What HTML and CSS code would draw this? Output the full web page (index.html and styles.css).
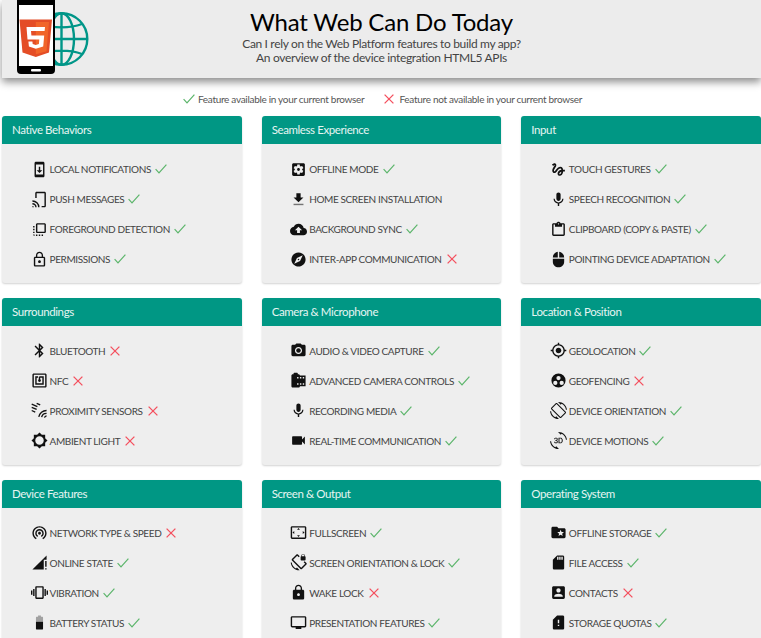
FILE: index.html
```html
<!DOCTYPE html>
<html lang="en">
<head>
<meta charset="utf-8">
<title>What Web Can Do Today</title>
<link rel="stylesheet" href="styles.css">
</head>
<body>
<svg class="defs" width="0" height="0" aria-hidden="true">
<defs>
<symbol id="ok" viewBox="0 0 12 10"><path d="M.6 5.2 4 8.8 11.4.6" fill="none" stroke="currentColor" stroke-width="1.2"/></symbol>
<symbol id="no" viewBox="0 0 10 10"><path d="M.6.6l8.8 8.8M9.4.6.6 9.4" fill="none" stroke="currentColor" stroke-width="1.3"/></symbol>
<symbol id="i-notify" viewBox="0 0 24 24"><path d="M17 1.01L7 1c-1.1 0-2 .9-2 2v18c0 1.1.9 2 2 2h10c1.1 0 2-.9 2-2V3c0-1.1-.9-1.99-2-1.99zM17 19H7V5h10v14zm-1-6h-3V8h-2v5H8l4 4 4-4z"/></symbol>
<symbol id="i-push" viewBox="0 0 24 24"><path d="M8 1h11c1.1 0 2 .9 2 2v18c0 1.1-.9 2-2 2h-4v-2h4V3H8v7H6V3c0-1.1.9-2 2-2zM2 21a2 2 0 0 1 2 2H2zm0-4a6 6 0 0 1 6 6H6a4 4 0 0 0-4-4zm0-4a10 10 0 0 1 10 10h-2a8 8 0 0 0-8-8z"/></symbol>
<symbol id="i-front" viewBox="0 0 24 24"><path d="M3 13h2v-2H3v2zm0 4h2v-2H3v2zm2 4v-2H3c0 1.1.89 2 2 2zM3 9h2V7H3v2zm12 12h2v-2h-2v2zm4-18H9c-1.11 0-2 .9-2 2v10c0 1.1.89 2 2 2h10c1.1 0 2-.9 2-2V5c0-1.1-.9-2-2-2zm0 12H9V5h10v10zm-8 6h2v-2h-2v2zm-4 0h2v-2H7v2z"/></symbol>
<symbol id="i-perm" viewBox="0 0 24 24"><path d="M12 17c1.1 0 2-.9 2-2s-.9-2-2-2-2 .9-2 2 .9 2 2 2zm6-9h-1V6c0-2.76-2.24-5-5-5S7 3.24 7 6v2H6c-1.1 0-2 .9-2 2v10c0 1.1.9 2 2 2h12c1.1 0 2-.9 2-2V10c0-1.1-.9-2-2-2zM8.9 6c0-1.71 1.39-3.1 3.1-3.1s3.1 1.39 3.1 3.1v2H8.9V6zM18 20H6V10h12v10z"/></symbol>
<symbol id="i-offline" viewBox="0 0 24 24"><path d="M12 10c-1.1 0-2 .9-2 2s.9 2 2 2 2-.9 2-2-.9-2-2-2zm7-7H5c-1.11 0-2 .9-2 2v14c0 1.1.89 2 2 2h14c1.11 0 2-.9 2-2V5c0-1.1-.89-2-2-2zm-1.75 9c0 .23-.02.46-.05.68l1.48 1.16c.13.11.17.3.08.45l-1.4 2.42c-.09.15-.27.21-.43.15l-1.74-.7c-.36.28-.76.51-1.18.69l-.26 1.85c-.03.17-.18.3-.35.3h-2.8c-.17 0-.32-.13-.35-.29l-.26-1.85c-.43-.18-.82-.41-1.18-.69l-1.74.7c-.16.06-.34 0-.43-.15l-1.4-2.42c-.09-.15-.05-.34.08-.45l1.48-1.16c-.03-.23-.05-.46-.05-.69 0-.23.02-.46.05-.68l-1.48-1.16c-.13-.11-.17-.3-.08-.45l1.4-2.42c.09-.15.27-.21.43-.15l1.74.7c.36-.28.76-.51 1.18-.69l.26-1.85c.03-.17.18-.3.35-.3h2.8c.17 0 .32.13.35.29l.26 1.85c.43.18.82.41 1.18.69l1.74-.7c.16-.06.34 0 .43.15l1.4 2.42c.09.15.05.34-.08.45l-1.48 1.16c.03.23.05.46.05.69z"/></symbol>
<symbol id="i-home" viewBox="0 0 24 24"><path d="M19 9h-4V3H9v6H5l7 7 7-7z"/><path d="M5 18v2h14v-2H5z" opacity=".55"/></symbol>
<symbol id="i-cloud" viewBox="0 0 24 24"><path d="M19.35 10.04C18.67 6.59 15.64 4 12 4 9.11 4 6.6 5.64 5.35 8.04 2.34 8.36 0 10.91 0 14c0 3.31 2.69 6 6 6h13c2.76 0 5-2.24 5-5 0-2.64-2.05-4.78-4.65-4.96zM14 13v4h-4v-4H7l5-5 5 5h-3z"/></symbol>
<symbol id="i-explore" viewBox="0 0 24 24"><path d="M12 10.9c-.61 0-1.1.49-1.1 1.1s.49 1.1 1.1 1.1c.61 0 1.1-.49 1.1-1.1s-.49-1.1-1.1-1.1zM12 2C6.48 2 2 6.48 2 12s4.48 10 10 10 10-4.48 10-10S17.52 2 12 2zm2.19 12.19L6 18l3.81-8.19L18 6l-3.81 8.19z"/></symbol>
<symbol id="i-gesture" viewBox="0 0 24 24"><path d="M4.59 6.89c.7-.71 1.4-1.35 1.71-1.22.5.2 0 1.03-.3 1.52-.25.42-2.86 3.89-2.86 6.31 0 1.28.48 2.34 1.34 2.98.75.56 1.74.73 2.64.46 1.07-.31 1.95-1.4 3.06-2.77 1.21-1.49 2.83-3.44 4.08-3.44 1.63 0 1.65 1.01 1.76 1.79-3.78.64-5.38 3.67-5.38 5.37 0 1.7 1.44 3.09 3.21 3.09 1.63 0 4.29-1.33 4.69-6.1H21v-2.5h-2.47c-.15-1.65-1.09-4.2-4.03-4.2-2.25 0-4.18 1.91-4.94 2.84-.58.73-2.06 2.48-2.29 2.72-.25.3-.68.84-1.11.84-.45 0-.72-.83-.36-1.92.35-1.09 1.4-2.86 1.85-3.52.78-1.14 1.3-1.92 1.3-3.28C8.95 3.69 7.31 3 6.44 3 5.12 3 3.97 4 3.72 4.25c-.36.36-.66.66-.88.93l1.75 1.71zm9.29 11.66c-.31 0-.74-.26-.74-.72 0-.6.73-2.2 2.87-2.76-.3 2.69-1.43 3.48-2.13 3.48z"/></symbol>
<symbol id="i-mic" viewBox="0 0 24 24"><path d="M12 14c1.66 0 2.99-1.34 2.99-3L15 5c0-1.66-1.34-3-3-3S9 3.34 9 5v6c0 1.66 1.34 3 3 3zm5.3-3c0 3-2.54 5.1-5.3 5.1S6.7 14 6.7 11H5c0 3.41 2.72 6.23 6 6.72V21h2v-3.28c3.28-.48 6-3.3 6-6.72h-1.7z"/></symbol>
<symbol id="i-clip" viewBox="0 0 24 24"><path d="M19 3h-4.18C14.4 1.84 13.3 1 12 1c-1.3 0-2.4.84-2.82 2H5c-1.1 0-2 .9-2 2v14c0 1.1.9 2 2 2h14c1.1 0 2-.9 2-2V5c0-1.1-.9-2-2-2zm-7 0c.55 0 1 .45 1 1s-.45 1-1 1-1-.45-1-1 .45-1 1-1zm7 16H5V5h2v3h10V5h2v14z"/></symbol>
<symbol id="i-mouse" viewBox="0 0 24 24"><path d="M13 1.07V9h7c0-4.08-3.05-7.44-7-7.93zM4 15c0 4.42 3.58 8 8 8s8-3.58 8-8v-4H4v4zm7-13.93C7.05 1.56 4 4.92 4 9h7V1.07z"/></symbol>
<symbol id="i-bt" viewBox="0 0 24 24"><path d="M17.71 7.71L12 2h-1v7.59L6.41 5 5 6.41 10.59 12 5 17.59 6.41 19 11 14.41V22h1l5.71-5.71-4.3-4.29 4.3-4.29zM13 5.83l1.88 1.88L13 9.59V5.83zm1.88 10.46L13 18.17v-3.76l1.88 1.88z"/></symbol>
<symbol id="i-nfc" viewBox="0 0 24 24"><path d="M20 2H4c-1.1 0-2 .9-2 2v16c0 1.1.9 2 2 2h16c1.1 0 2-.9 2-2V4c0-1.1-.9-2-2-2zm0 18H4V4h16v16zM18 6h-5c-1.1 0-2 .9-2 2v2.28c-.6.35-1 .98-1 1.72 0 1.1.9 2 2 2s2-.9 2-2c0-.74-.4-1.38-1-1.72V8h3v8H8V8h2V6H6v12h12V6z"/></symbol>
<symbol id="i-prox" viewBox="0 0 24 24"><path d="M1 3l8 3.500M1 7.500l7 3M1 12l5 2.200M8 2l5 2.200M11 21a11 11 0 0 1 11-9M15 21.500a7 7 0 0 1 7-5.500M19 22a3.500 3.500 0 0 1 3-2.500" fill="none" stroke="currentColor" stroke-width="1.900"/></symbol>
<symbol id="i-amb" viewBox="0 0 24 24"><path d="M20 15.31L23.31 12 20 8.69V4h-4.69L12 .69 8.69 4H4v4.690L.69 12 4 15.31V20h4.690L12 23.31 15.31 20H20v-4.690zM12 18c-3.310 0-6-2.690-6-6s2.690-6 6-6 6 2.690 6 6-2.690 6-6 6z"/></symbol>
<symbol id="i-cam" viewBox="0 0 24 24"><circle cx="12" cy="12" r="3.200"/><path d="M9 2L7.170 4H4c-1.100 0-2 .9-2 2v12c0 1.100.9 2 2 2h16c1.100 0 2-.9 2-2V6c0-1.100-.9-2-2-2h-3.170L15 2H9zm3 15c-2.760 0-5-2.240-5-5s2.240-5 5-5 5 2.240 5 5-2.240 5-5 5z"/></symbol>
<symbol id="i-roll" viewBox="0 0 24 24"><path d="M14 5c0-1.100-.9-2-2-2h-1V2c0-.55-.45-1-1-1H6c-.55 0-1 .45-1 1v1H4c-1.100 0-2 .9-2 2v15c0 1.100.9 2 2 2h8c1.100 0 2-.9 2-2h8V5h-8zm-2 13h-2v-2h2v2zm0-9h-2V7h2v2zm4 9h-2v-2h2v2zm0-9h-2V7h2v2zm4 9h-2v-2h2v2zm0-9h-2V7h2v2z"/></symbol>
<symbol id="i-video" viewBox="0 0 24 24"><path d="M17 10.500V7c0-.55-.45-1-1-1H4c-.55 0-1 .45-1 1v10c0 .55.45 1 1 1h12c.55 0 1-.45 1-1v-3.500l4 4v-11l-4 4z"/></symbol>
<symbol id="i-geo" viewBox="0 0 24 24"><path d="M12 8c-2.210 0-4 1.790-4 4s1.790 4 4 4 4-1.790 4-4-1.790-4-4-4zm8.940 3c-.46-4.170-3.770-7.480-7.940-7.940V1h-2v2.060C6.830 3.520 3.520 6.830 3.060 11H1v2h2.060c.46 4.170 3.770 7.480 7.940 7.940V23h2v-2.060c4.170-.46 7.480-3.770 7.940-7.940H23v-2h-2.060zM12 19c-3.870 0-7-3.130-7-7s3.130-7 7-7 7 3.130 7 7-3.130 7-7 7z"/></symbol>
<symbol id="i-fence" viewBox="0 0 24 24"><path fill-rule="evenodd" d="M12 2a10 10 0 1 0 0 20 10 10 0 0 0 0-20zM12 5.500a3 3 0 1 1 0 6 3 3 0 0 1 0-6zM7.500 12.500a3 3 0 1 1 0 6 3 3 0 0 1 0-6zM16.500 12.500a3 3 0 1 1 0 6 3 3 0 0 1 0-6z"/></symbol>
<symbol id="i-rot" viewBox="0 0 24 24"><path d="M16.480 2.520c3.270 1.550 5.610 4.720 5.970 8.480h1.500C23.440 4.840 18.290 0 12 0l-.66.03 3.810 3.810 1.330-1.320zm-6.250-.77c-.59-.59-1.540-.59-2.120 0L1.750 8.110c-.59.59-.59 1.540 0 2.120l12.020 12.020c.59.59 1.540.59 2.120 0l6.360-6.360c.59-.59.59-1.540 0-2.120L10.230 1.750zm4.600 19.440L2.810 9.170l6.360-6.360 12.020 12.020-6.360 6.360zm-7.310.29C4.250 19.940 1.910 16.760 1.550 13H.05C.56 19.160 5.710 24 12 24l.66-.03-3.810-3.810-1.330 1.320z"/></symbol>
<symbol id="i-3d" viewBox="0 0 24 24"><path d="M7.520 21.480C4.250 19.940 1.910 16.760 1.550 13H.05C.56 19.160 5.710 24 12 24l.66-.03-3.810-3.810-1.330 1.320zm.89-6.520c-.19 0-.37-.03-.52-.08-.16-.06-.29-.13-.4-.24-.11-.1-.2-.22-.26-.37-.06-.14-.09-.3-.09-.47h-1.300c0 .36.07.68.21.95.14.27.33.5.56.69.24.18.51.32.82.41.3.1.62.15.96.15.37 0 .72-.05 1.030-.15.32-.1.6-.25.83-.44s.42-.43.55-.72c.13-.29.2-.61.2-.97 0-.19-.02-.38-.07-.56-.05-.18-.12-.35-.23-.51-.1-.16-.24-.3-.4-.43-.17-.13-.37-.23-.61-.31.2-.09.37-.2.52-.33.15-.13.27-.27.37-.42.1-.15.17-.3.22-.46.05-.16.07-.32.07-.48 0-.36-.06-.68-.18-.96-.12-.28-.29-.51-.51-.69-.2-.19-.47-.33-.77-.43C9.100 8.050 8.760 8 8.390 8c-.36 0-.69.05-1 .16-.3.11-.57.26-.79.45-.21.19-.38.41-.51.67-.12.26-.18.54-.18.85h1.300c0-.17.03-.32.09-.45s.14-.25.25-.34c.11-.09.23-.17.38-.22.15-.05.3-.08.48-.08.4 0 .7.1.89.31.19.2.29.49.29.86 0 .18-.03.34-.08.49-.05.15-.14.27-.25.37-.11.1-.25.18-.41.24-.16.06-.36.09-.58.09H7.500v1.030h.77c.22 0 .42.02.6.07s.33.13.45.23c.12.11.22.24.29.4.07.16.1.35.1.57 0 .41-.12.72-.35.93-.23.23-.55.33-.95.33zm8.550-5.920c-.32-.33-.7-.59-1.140-.77-.43-.18-.92-.27-1.460-.27H12v8h2.300c.55 0 1.060-.09 1.510-.27.45-.18.84-.43 1.160-.76.32-.33.57-.73.74-1.190.17-.47.26-.99.26-1.570v-.4c0-.58-.09-1.100-.26-1.570-.18-.47-.43-.87-.75-1.200zm-.39 3.160c0 .42-.05.79-.14 1.130-.1.33-.24.62-.43.85-.19.23-.43.41-.71.53-.29.12-.62.18-.99.18h-.91V9.120h.97c.72 0 1.270.23 1.640.69.38.46.57 1.120.57 1.990v.4zM12 0l-.66.03 3.810 3.810 1.330-1.330c3.270 1.550 5.610 4.720 5.970 8.480h1.500C23.440 4.840 18.290 0 12 0z"/></symbol>
<symbol id="i-net" viewBox="0 0 24 24"><path d="M12 11c-1.100 0-2 .9-2 2s.9 2 2 2 2-.9 2-2-.9-2-2-2zm6 2c0-3.310-2.690-6-6-6s-6 2.690-6 6c0 2.220 1.210 4.150 3 5.190l1-1.740c-1.190-.7-2-1.970-2-3.450 0-2.210 1.790-4 4-4s4 1.790 4 4c0 1.480-.81 2.750-2 3.450l1 1.740c1.790-1.040 3-2.970 3-5.190zM12 3C6.480 3 2 7.480 2 13c0 3.700 2.010 6.920 4.990 8.650l1-1.730C5.610 18.530 4 15.960 4 13c0-4.420 3.580-8 8-8s8 3.580 8 8c0 2.960-1.610 5.530-4 6.920l1 1.730c2.990-1.730 5-4.950 5-8.650 0-5.520-4.480-10-10-10z"/></symbol>
<symbol id="i-online" viewBox="0 0 24 24"><path d="M20 18h2v-8h-2v8zm0 4h2v-2h-2v2zM2 22h16V8h4V2L2 22z"/></symbol>
<symbol id="i-vib" viewBox="0 0 24 24"><path d="M0 15h2V9H0v6zm3 2h2V7H3v10zm19-8v6h2V9h-2zm-3 8h2V7h-2v10zM16.500 3h-9C6.670 3 6 3.670 6 4.500v15c0 .83.67 1.500 1.500 1.500h9c.83 0 1.500-.67 1.500-1.500v-15c0-.83-.67-1.500-1.500-1.500zM16 19H8V5h8v14z"/></symbol>
<symbol id="i-batt" viewBox="0 0 24 24"><path opacity=".35" d="M15.670 4H14V2h-4v2H8.330C7.600 4 7 4.600 7 5.330V11h10V5.330C17 4.600 16.400 4 15.670 4z"/><path d="M7 11v9.670C7 21.400 7.600 22 8.330 22h7.330c.74 0 1.340-.6 1.340-1.330V11H7z"/></symbol>
<symbol id="i-full" viewBox="0 0 24 24"><path d="M12.010 5.500L10 8h4l-1.990-2.500zM18 10v4l2.500-1.990L18 10zM6 10l-2.500 2.010L6 14v-4zm8 6h-4l2.010 2.500L14 16zm7-13H3c-1.100 0-2 .9-2 2v14c0 1.100.9 2 2 2h18c1.100 0 2-.9 2-2V5c0-1.100-.9-2-2-2zm0 16.010H3V4.990h18v14.020z"/></symbol>
<symbol id="i-srot" viewBox="0 0 24 24"><path d="M23.250 12.770l-2.570-2.570-1.410 1.410 2.220 2.220-5.660 5.660L4.510 8.170l5.660-5.660 2.100 2.100 1.410-1.410L11.230.75c-.59-.59-1.540-.59-2.120 0L2.750 7.110c-.59.59-.59 1.540 0 2.120l12.020 12.020c.59.59 1.540.59 2.120 0l6.360-6.360c.59-.59.59-1.540 0-2.120zM8.470 20.480C5.200 18.940 2.860 15.760 2.500 12H1c.51 6.160 5.660 11 11.950 11l.66-.03-3.810-3.820-1.330 1.330zM16 9h5c.55 0 1-.45 1-1V4c0-.55-.45-1-1-1v-.5C21 1.120 19.880 0 18.500 0S16 1.120 16 2.500V3c-.55 0-1 .45-1 1v4c0 .55.45 1 1 1zm.8-6.500c0-.94.76-1.700 1.700-1.700s1.700.76 1.700 1.700V3h-3.400v-.5z"/></symbol>
<symbol id="i-lock" viewBox="0 0 24 24"><path d="M18 8h-1V6c0-2.760-2.240-5-5-5S7 3.240 7 6v2H6c-1.100 0-2 .9-2 2v10c0 1.100.9 2 2 2h12c1.100 0 2-.9 2-2V10c0-1.100-.9-2-2-2zm-6 9c-1.100 0-2-.9-2-2s.9-2 2-2 2 .9 2 2-.9 2-2 2zm3.100-9H8.900V6c0-1.710 1.390-3.100 3.100-3.100 1.710 0 3.100 1.390 3.100 3.100v2z"/></symbol>
<symbol id="i-tv" viewBox="0 0 24 24"><path d="M21 3H3c-1.100 0-2 .9-2 2v12c0 1.100.9 2 2 2h5v2h8v-2h5c1.100 0 1.990-.9 1.990-2L23 5c0-1.100-.9-2-2-2zm0 14H3V5h18v12z"/></symbol>
<symbol id="i-folder" viewBox="0 0 24 24"><path d="M20 6h-8l-2-2H4c-1.100 0-1.990.9-1.990 2L2 18c0 1.100.9 2 2 2h16c1.100 0 2-.9 2-2V8c0-1.100-.9-2-2-2zm-2.060 11L15 15.280 12.060 17l.78-3.330-2.590-2.240 3.410-.29L15 8l1.340 3.140 3.410.29-2.590 2.240.78 3.330z"/></symbol>
<symbol id="i-sd" viewBox="0 0 24 24"><path d="M18 2h-8L4.020 8 4 20c0 1.100.9 2 2 2h12c1.100 0 2-.9 2-2V4c0-1.100-.9-2-2-2zm-6 6h-2V4h2v4zm3 0h-2V4h2v4zm3 0h-2V4h2v4z"/></symbol>
<symbol id="i-contact" viewBox="0 0 24 24"><path d="M3 5v14c0 1.100.89 2 2 2h14c1.100 0 2-.9 2-2V5c0-1.100-.9-2-2-2H5c-1.110 0-2 .9-2 2zm12 4c0 1.660-1.340 3-3 3s-3-1.340-3-3 1.340-3 3-3 3 1.340 3 3zm-9 8c0-2 4-3.100 6-3.100s6 1.100 6 3.100v1H6v-1z"/></symbol>
<symbol id="i-quota" viewBox="0 0 24 24"><path d="M18 2h-8L4.020 8 4 20c0 1.100.9 2 2 2h12c1.100 0 2-.9 2-2V4c0-1.100-.9-2-2-2zm-5 15h-2v-2h2v2zm0-4h-2V8h2v5z"/></symbol>
</defs>
</svg>

<header class="hero">
  <div class="hero-logo">
    <svg class="logo" viewBox="0 0 72 74" width="72" height="74" aria-hidden="true">
      <g fill="none" stroke="#009688" stroke-width="2.400">
        <circle cx="44.500" cy="39" r="25.800"/>
        <ellipse cx="44.500" cy="39" rx="12.500" ry="25.800"/>
        <path d="M44.500 13v52M19 39h51M24 24c12 4.500 29 4.500 41 0M24 54c12-4.500 29-4.500 41 0"/>
      </g>
      <rect x="0" y="-4" width="38" height="78" rx="4" fill="#000"/>
      <rect x="2" y="5" width="34" height="61" fill="#fff"/>
      <rect x="14" y="69" width="10" height="2.500" rx="1" fill="#fff"/>
      <path d="M2.500 19.500h32.500l-3 33L18.800 57 5.500 52.500z" fill="#e44d26"/>
      <path d="M18.800 22v32.300l10.700-3 2.500-29.300z" fill="#f16529"/>
      <path d="M9.500 27h18.500l-.4 4H14l.4 4.500h12.800l-1 11L18.800 48.700l-6.900-2.100-.5-5h4l.3 2.500 3.100.9 3.100-.9.4-4.600H10.500z" fill="#fff"/>
    </svg>
  </div>
  <div class="hero-text">
    <h1>What Web Can Do Today</h1>
    <p>Can I rely on the Web Platform features to build my app?</p>
    <p>An overview of the device integration HTML5 APIs</p>
  </div>
  <div></div>
</header>

<div class="legend">
  <span class="legend-item"><svg class="mark ok"><use href="#ok"/></svg>Feature available in your current browser</span>
  <span class="legend-item"><svg class="mark no"><use href="#no"/></svg>Feature not available in your current browser</span>
</div>

<main class="grid">
  <section class="card">
    <h2>Native Behaviors</h2>
    <ul>
      <li><svg class="icon"><use href="#i-notify"/></svg>Local Notifications<svg class="mark ok"><use href="#ok"/></svg></li>
      <li><svg class="icon"><use href="#i-push"/></svg>Push Messages<svg class="mark ok"><use href="#ok"/></svg></li>
      <li><svg class="icon"><use href="#i-front"/></svg>Foreground Detection<svg class="mark ok"><use href="#ok"/></svg></li>
      <li><svg class="icon"><use href="#i-perm"/></svg>Permissions<svg class="mark ok"><use href="#ok"/></svg></li>
    </ul>
  </section>
  <section class="card">
    <h2>Seamless Experience</h2>
    <ul>
      <li><svg class="icon"><use href="#i-offline"/></svg>Offline Mode<svg class="mark ok"><use href="#ok"/></svg></li>
      <li><svg class="icon"><use href="#i-home"/></svg>Home Screen Installation</li>
      <li><svg class="icon"><use href="#i-cloud"/></svg>Background Sync<svg class="mark ok"><use href="#ok"/></svg></li>
      <li><svg class="icon"><use href="#i-explore"/></svg>Inter-App Communication<svg class="mark no"><use href="#no"/></svg></li>
    </ul>
  </section>
  <section class="card">
    <h2>Input</h2>
    <ul>
      <li><svg class="icon"><use href="#i-gesture"/></svg>Touch Gestures<svg class="mark ok"><use href="#ok"/></svg></li>
      <li><svg class="icon"><use href="#i-mic"/></svg>Speech Recognition<svg class="mark ok"><use href="#ok"/></svg></li>
      <li><svg class="icon"><use href="#i-clip"/></svg>Clipboard (Copy &amp; Paste)<svg class="mark ok"><use href="#ok"/></svg></li>
      <li><svg class="icon"><use href="#i-mouse"/></svg>Pointing Device Adaptation<svg class="mark ok"><use href="#ok"/></svg></li>
    </ul>
  </section>
  <section class="card">
    <h2>Surroundings</h2>
    <ul>
      <li><svg class="icon"><use href="#i-bt"/></svg>Bluetooth<svg class="mark no"><use href="#no"/></svg></li>
      <li><svg class="icon"><use href="#i-nfc"/></svg>NFC<svg class="mark no"><use href="#no"/></svg></li>
      <li><svg class="icon"><use href="#i-prox"/></svg>Proximity Sensors<svg class="mark no"><use href="#no"/></svg></li>
      <li><svg class="icon"><use href="#i-amb"/></svg>Ambient Light<svg class="mark no"><use href="#no"/></svg></li>
    </ul>
  </section>
  <section class="card">
    <h2>Camera &amp; Microphone</h2>
    <ul>
      <li><svg class="icon"><use href="#i-cam"/></svg>Audio &amp; Video Capture<svg class="mark ok"><use href="#ok"/></svg></li>
      <li><svg class="icon"><use href="#i-roll"/></svg>Advanced Camera Controls<svg class="mark ok"><use href="#ok"/></svg></li>
      <li><svg class="icon"><use href="#i-mic"/></svg>Recording Media<svg class="mark ok"><use href="#ok"/></svg></li>
      <li><svg class="icon"><use href="#i-video"/></svg>Real-Time Communication<svg class="mark ok"><use href="#ok"/></svg></li>
    </ul>
  </section>
  <section class="card">
    <h2>Location &amp; Position</h2>
    <ul>
      <li><svg class="icon"><use href="#i-geo"/></svg>Geolocation<svg class="mark ok"><use href="#ok"/></svg></li>
      <li><svg class="icon"><use href="#i-fence"/></svg>Geofencing<svg class="mark no"><use href="#no"/></svg></li>
      <li><svg class="icon"><use href="#i-rot"/></svg>Device Orientation<svg class="mark ok"><use href="#ok"/></svg></li>
      <li><svg class="icon"><use href="#i-3d"/></svg>Device Motions<svg class="mark ok"><use href="#ok"/></svg></li>
    </ul>
  </section>
  <section class="card">
    <h2>Device Features</h2>
    <ul>
      <li><svg class="icon"><use href="#i-net"/></svg>Network Type &amp; Speed<svg class="mark no"><use href="#no"/></svg></li>
      <li><svg class="icon"><use href="#i-online"/></svg>Online State<svg class="mark ok"><use href="#ok"/></svg></li>
      <li><svg class="icon"><use href="#i-vib"/></svg>Vibration<svg class="mark ok"><use href="#ok"/></svg></li>
      <li><svg class="icon"><use href="#i-batt"/></svg>Battery Status<svg class="mark ok"><use href="#ok"/></svg></li>
    </ul>
  </section>
  <section class="card">
    <h2>Screen &amp; Output</h2>
    <ul>
      <li><svg class="icon"><use href="#i-full"/></svg>Fullscreen<svg class="mark ok"><use href="#ok"/></svg></li>
      <li><svg class="icon"><use href="#i-srot"/></svg>Screen Orientation &amp; Lock<svg class="mark ok"><use href="#ok"/></svg></li>
      <li><svg class="icon"><use href="#i-lock"/></svg>Wake Lock<svg class="mark no"><use href="#no"/></svg></li>
      <li><svg class="icon"><use href="#i-tv"/></svg>Presentation Features<svg class="mark ok"><use href="#ok"/></svg></li>
    </ul>
  </section>
  <section class="card">
    <h2>Operating System</h2>
    <ul>
      <li><svg class="icon"><use href="#i-folder"/></svg>Offline Storage<svg class="mark ok"><use href="#ok"/></svg></li>
      <li><svg class="icon"><use href="#i-sd"/></svg>File Access<svg class="mark ok"><use href="#ok"/></svg></li>
      <li><svg class="icon"><use href="#i-contact"/></svg>Contacts<svg class="mark no"><use href="#no"/></svg></li>
      <li><svg class="icon"><use href="#i-quota"/></svg>Storage Quotas<svg class="mark ok"><use href="#ok"/></svg></li>
    </ul>
  </section>
</main>
</body>
</html>
```
FILE: styles.css
```css
* { box-sizing: border-box; }
html, body { margin: 0; padding: 0; overflow: hidden; height: 638px; }
body { background: #fff; font-family: "Lato", sans-serif; font-weight: 400; color: #444; }
.defs { position: absolute; }

.hero {
  height: 78px;
  margin-left: 2px;
  background: #ececec;
  box-shadow: 0 4px 8px rgba(0,0,0,.45);
  display: grid;
  grid-template-columns: 1fr auto 1fr;
}
.hero-logo { padding-left: 15px; }
.logo { display: block; }
.hero-text { text-align: center; padding-top: 8px; }
.hero-text h1 { margin: 0 0 1px; font-size: 24px; line-height: 28px; font-weight: 400; letter-spacing: -.19px; color: #000; }
.hero-text p { margin: 0; font-size: 12px; line-height: 14px; letter-spacing: -.34px; color: #444; }

.legend {
  height: 38.200px;
  padding: 14px 0 0 4px;
  display: flex;
  justify-content: center;
  gap: 15px;
  font-size: 10px;
  line-height: 14px;
  letter-spacing: -.3px;
  color: #555;
}
.legend-item { display: flex; align-items: center; height: 14px; }
.legend-item .mark { margin: 0 3px 0 0; }
.legend-item .mark.no { margin-right: 5px; }

.grid {
  display: grid;
  grid-template-columns: repeat(3, 1fr);
  column-gap: 20px;
  row-gap: 14.750px;
  padding-left: 2px;
}
.card {
  height: 167px;
  background: #eee;
  border-radius: 3px;
  box-shadow: 0 1px 2px rgba(0,0,0,.18);
}
.card h2 {
  margin: 0;
  height: 28px;
  padding-left: 10px;
  background: #009784;
  border-radius: 3px 3px 0 0;
  color: #e6f5f2;
  font-size: 11.500px;
  line-height: 28.400px;
  letter-spacing: -.4px;
  font-weight: 400;
}
.card ul { list-style: none; margin: 0; padding: 10px 0 0 28.500px; }
.card li {
  display: flex;
  align-items: center;
  height: 30px;
  font-size: 10px;
  letter-spacing: -.38px;
  text-transform: uppercase;
  color: #444;
}
.icon { width: 17px; height: 17px; fill: #111; color: #111; margin-right: 2px; flex: none; }
.mark { width: 12px; height: 10px; margin-left: 4px; flex: none; }
.mark.ok { color: #5cb56b; }
.mark.no { width: 10px; margin-left: 5px; color: #f4505e; }
```
